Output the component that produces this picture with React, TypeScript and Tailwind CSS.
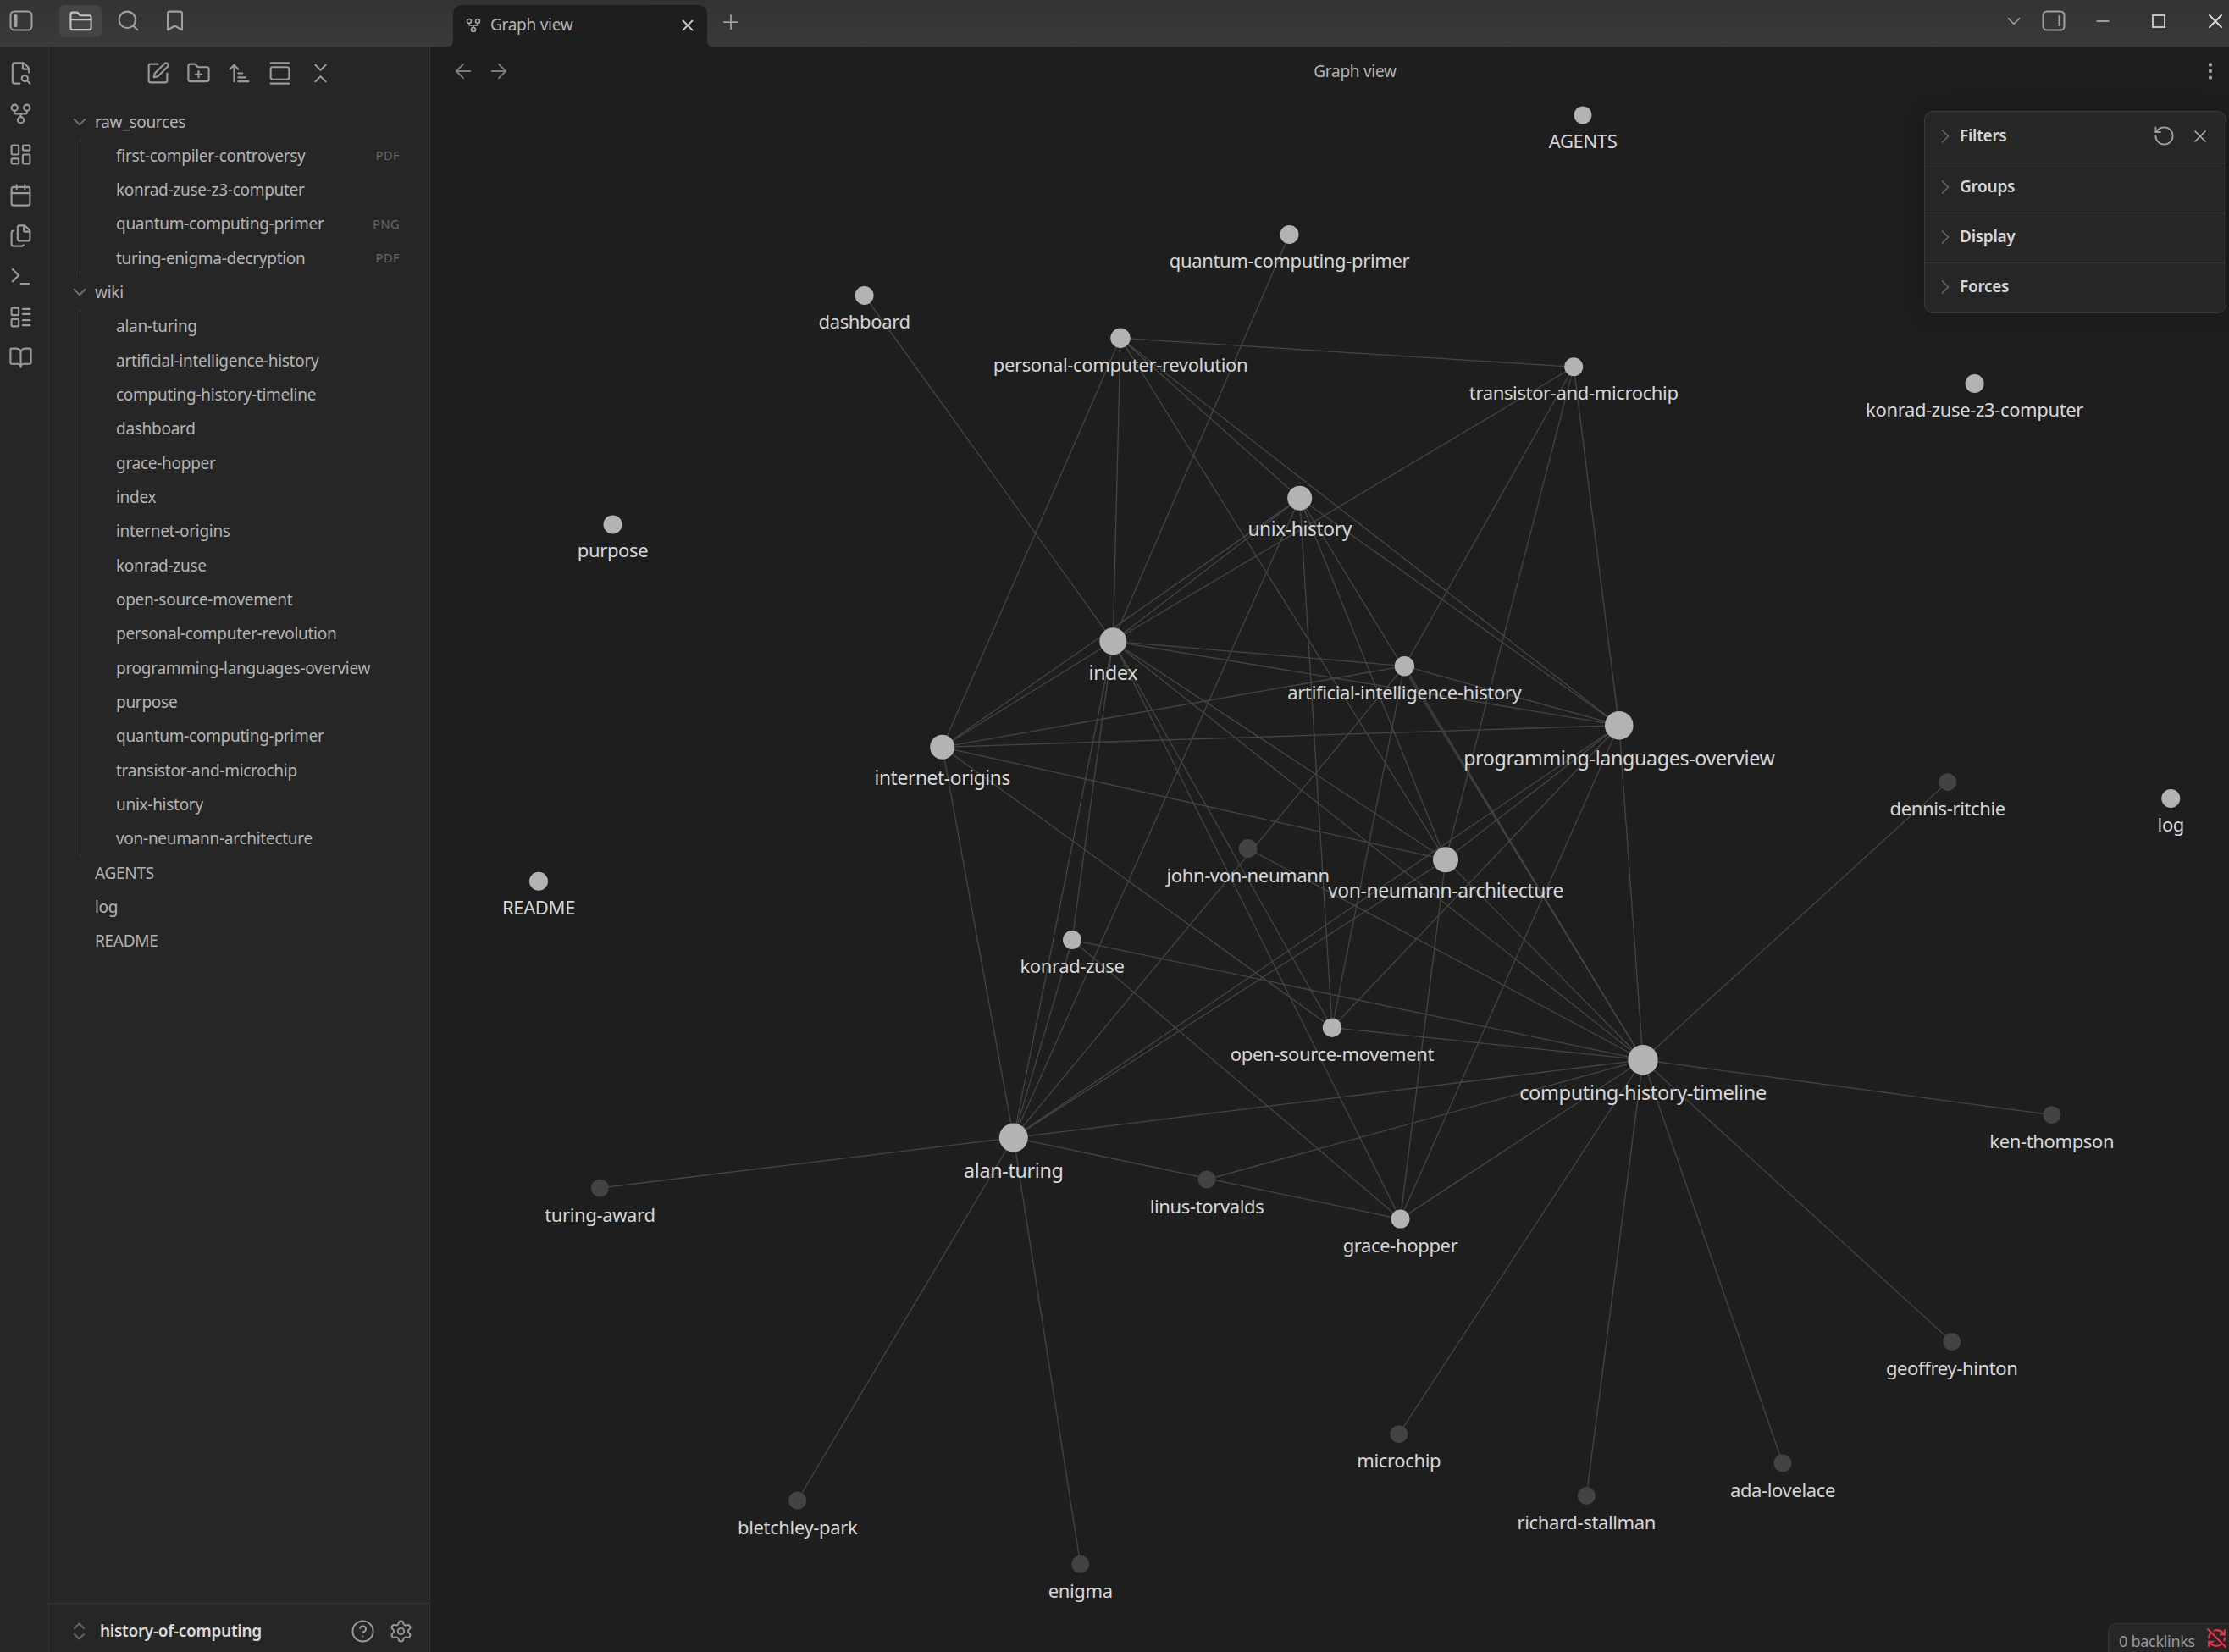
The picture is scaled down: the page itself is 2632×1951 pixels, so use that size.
import React from 'react';
import {
  ArrowLeft,
  ArrowRight,
  ArrowUpNarrowWide,
  Bookmark,
  BookOpen,
  Calendar,
  ChevronDown,
  ChevronRight,
  ChevronsDownUp,
  ChevronsUpDown,
  CircleHelp,
  EllipsisVertical,
  FileSearch2,
  Files,
  FolderClosed,
  FolderPlus,
  GalleryVertical,
  GitFork,
  LayoutDashboard,
  LayoutList,
  Minus,
  Plus,
  RefreshCwOff,
  RotateCcw,
  Search,
  Settings,
  SquarePen,
  Terminal,
  X,
} from 'lucide-react';

type GraphNode = { x: number; y: number; r: number; dim?: boolean };

const NODES: Record<string, GraphNode> = {
  AGENTS: { x: 1869, y: 136, r: 10.5 },
  'quantum-computing-primer': { x: 1522.5, y: 277, r: 11 },
  dashboard: { x: 1020.6, y: 349, r: 11 },
  'personal-computer-revolution': { x: 1323, y: 399.3, r: 11.7 },
  'transistor-and-microchip': { x: 1858.2, y: 433.3, r: 11 },
  'konrad-zuse-z3-computer': { x: 2331.6, y: 453, r: 11 },
  'unix-history': { x: 1534.7, y: 588.3, r: 14.5 },
  purpose: { x: 723.5, y: 619.4, r: 11 },
  index: { x: 1314.3, y: 757.3, r: 16 },
  'artificial-intelligence-history': { x: 1658.4, y: 786.7, r: 11.7 },
  'programming-languages-overview': { x: 1911.8, y: 856.7, r: 16.8 },
  'internet-origins': { x: 1112.7, y: 882.3, r: 14.5 },
  'dennis-ritchie': { x: 2299.7, y: 923.7, r: 10.5, dim: true },
  log: { x: 2563.3, y: 943, r: 11 },
  'john-von-neumann': { x: 1473.6, y: 1002, r: 11, dim: true },
  'von-neumann-architecture': { x: 1707, y: 1015.3, r: 15 },
  README: { x: 636, y: 1040.7, r: 11 },
  'konrad-zuse': { x: 1266, y: 1110, r: 11 },
  'open-source-movement': { x: 1573, y: 1213.7, r: 11.2 },
  'computing-history-timeline': { x: 1940, y: 1251.7, r: 17.7 },
  'alan-turing': { x: 1196.8, y: 1343.6, r: 17 },
  'ken-thompson': { x: 2422.8, y: 1316.7, r: 10.5, dim: true },
  'turing-award': { x: 708.4, y: 1403, r: 10.5, dim: true },
  'linus-torvalds': { x: 1425, y: 1393, r: 10.5, dim: true },
  'grace-hopper': { x: 1653.5, y: 1439.6, r: 11 },
  'geoffrey-hinton': { x: 2304.7, y: 1584.6, r: 10.5, dim: true },
  microchip: { x: 1651.8, y: 1693.7, r: 10.5, dim: true },
  'ada-lovelace': { x: 2105, y: 1728, r: 10.5, dim: true },
  'richard-stallman': { x: 1873.3, y: 1766.6, r: 10.5, dim: true },
  'bletchley-park': { x: 941.7, y: 1772, r: 10.5, dim: true },
  enigma: { x: 1275.7, y: 1847.3, r: 10.5, dim: true },
};

const EDGES: [string, string][] = [
  ['dashboard', 'index'],
  ['quantum-computing-primer', 'index'],
  ['personal-computer-revolution', 'transistor-and-microchip'],
  ['personal-computer-revolution', 'internet-origins'],
  ['personal-computer-revolution', 'index'],
  ['personal-computer-revolution', 'unix-history'],
  ['personal-computer-revolution', 'programming-languages-overview'],
  ['personal-computer-revolution', 'von-neumann-architecture'],
  ['transistor-and-microchip', 'index'],
  ['transistor-and-microchip', 'artificial-intelligence-history'],
  ['transistor-and-microchip', 'von-neumann-architecture'],
  ['transistor-and-microchip', 'programming-languages-overview'],
  ['unix-history', 'index'],
  ['unix-history', 'internet-origins'],
  ['unix-history', 'alan-turing'],
  ['unix-history', 'open-source-movement'],
  ['unix-history', 'von-neumann-architecture'],
  ['unix-history', 'computing-history-timeline'],
  ['unix-history', 'programming-languages-overview'],
  ['index', 'internet-origins'],
  ['index', 'artificial-intelligence-history'],
  ['index', 'programming-languages-overview'],
  ['index', 'von-neumann-architecture'],
  ['index', 'computing-history-timeline'],
  ['index', 'konrad-zuse'],
  ['index', 'alan-turing'],
  ['index', 'open-source-movement'],
  ['index', 'grace-hopper'],
  ['artificial-intelligence-history', 'internet-origins'],
  ['artificial-intelligence-history', 'programming-languages-overview'],
  ['artificial-intelligence-history', 'alan-turing'],
  ['artificial-intelligence-history', 'open-source-movement'],
  ['artificial-intelligence-history', 'computing-history-timeline'],
  ['programming-languages-overview', 'internet-origins'],
  ['programming-languages-overview', 'von-neumann-architecture'],
  ['programming-languages-overview', 'alan-turing'],
  ['programming-languages-overview', 'open-source-movement'],
  ['programming-languages-overview', 'grace-hopper'],
  ['programming-languages-overview', 'computing-history-timeline'],
  ['internet-origins', 'alan-turing'],
  ['internet-origins', 'von-neumann-architecture'],
  ['internet-origins', 'open-source-movement'],
  ['john-von-neumann', 'computing-history-timeline'],
  ['von-neumann-architecture', 'alan-turing'],
  ['von-neumann-architecture', 'grace-hopper'],
  ['von-neumann-architecture', 'computing-history-timeline'],
  ['konrad-zuse', 'alan-turing'],
  ['konrad-zuse', 'computing-history-timeline'],
  ['konrad-zuse', 'grace-hopper'],
  ['open-source-movement', 'computing-history-timeline'],
  ['alan-turing', 'turing-award'],
  ['alan-turing', 'bletchley-park'],
  ['alan-turing', 'enigma'],
  ['alan-turing', 'computing-history-timeline'],
  ['alan-turing', 'grace-hopper'],
  ['linus-torvalds', 'computing-history-timeline'],
  ['grace-hopper', 'computing-history-timeline'],
  ['computing-history-timeline', 'dennis-ritchie'],
  ['computing-history-timeline', 'ken-thompson'],
  ['computing-history-timeline', 'geoffrey-hinton'],
  ['computing-history-timeline', 'ada-lovelace'],
  ['computing-history-timeline', 'richard-stallman'],
  ['computing-history-timeline', 'microchip'],
];

const RAW_SOURCES: [string, string?][] = [
  ['first-compiler-controversy', 'PDF'],
  ['konrad-zuse-z3-computer'],
  ['quantum-computing-primer', 'PNG'],
  ['turing-enigma-decryption', 'PDF'],
];

const WIKI = [
  'alan-turing',
  'artificial-intelligence-history',
  'computing-history-timeline',
  'dashboard',
  'grace-hopper',
  'index',
  'internet-origins',
  'konrad-zuse',
  'open-source-movement',
  'personal-computer-revolution',
  'programming-languages-overview',
  'purpose',
  'quantum-computing-primer',
  'transistor-and-microchip',
  'unix-history',
  'von-neumann-architecture',
];

function SidebarToggle({ side }: { side: 'left' | 'right' }) {
  return (
    <svg width="28" height="26" viewBox="0 0 28 26" fill="none" stroke="currentColor" strokeWidth="2">
      <rect x="1.5" y="1.5" width="25" height="22" rx="4.5" />
      {side === 'left' ? (
        <rect x="5" y="5" width="4.5" height="15" rx="1.5" fill="currentColor" stroke="none" />
      ) : (
        <line x1="20.5" y1="6" x2="20.5" y2="19" />
      )}
    </svg>
  );
}

function TitleBar() {
  return (
    <div className="flex h-[55px] shrink-0 bg-linear-to-b from-[#333333] to-[#3a3a3a] text-[#a0a0a0]">
      <div className="flex w-[535px] shrink-0 items-start">
        <div className="ml-[11px] mt-[12px] flex h-[26px] w-[28px] items-center justify-center">
          <SidebarToggle side="left" />
        </div>
        <div className="ml-[31px] mt-[6px] flex h-[38px] w-[50px] items-center justify-center rounded-[6px] bg-[#444444] text-[#c4c4c4]">
          <FolderClosed size={29} strokeWidth={1.75} />
        </div>
        <div className="ml-[17px] mt-[10px]">
          <Search size={29} strokeWidth={1.75} />
        </div>
        <div className="ml-[26px] mt-[10px]">
          <Bookmark size={29} strokeWidth={1.75} />
        </div>
      </div>

      <div className="relative mt-[6px] flex h-[49px] w-[300px] items-center rounded-t-[10px] bg-[#1e1e1e] pb-[2px] pl-[14px] pr-[12px]">
        <div className="absolute bottom-0 left-[-6px] h-[6px] w-[6px] bg-[#1e1e1e]">
          <div className="h-full w-full rounded-br-[6px] bg-[#3a3a3a]" />
        </div>
        <div className="absolute bottom-0 right-[-6px] h-[6px] w-[6px] bg-[#1e1e1e]">
          <div className="h-full w-full rounded-bl-[6px] bg-[#3a3a3a]" />
        </div>
        <GitFork size={20} strokeWidth={1.9} className="text-[#a8a8a8]" />
        <span className="ml-[10px] text-[#b4b4b4]">Graph view</span>
        <X size={22} strokeWidth={2} className="ml-auto text-[#c8c8c8]" />
      </div>
      <div className="ml-[14px] mt-[12px]">
        <Plus size={28} strokeWidth={1.5} />
      </div>

      <div className="ml-auto flex items-center pb-[5px]">
        <ChevronDown size={26} strokeWidth={1.6} />
        <div className="ml-[20px] flex">
          <SidebarToggle side="right" />
        </div>
        <Minus size={24} strokeWidth={1.4} className="ml-[32px] text-[#c0c0c0]" />
        <div className="ml-[46px] h-[16px] w-[16px] border-2 border-[#c0c0c0]" />
        <X size={28} strokeWidth={1.6} className="ml-[45px] mr-[2px] text-[#dadada]" />
      </div>
    </div>
  );
}

function Ribbon() {
  const icons = [FileSearch2, GitFork, LayoutDashboard, Calendar, Files, Terminal, LayoutList, BookOpen];
  return (
    <div className="flex w-[58px] shrink-0 flex-col items-start gap-[19px] border-r border-[#333333] bg-[#262626] pl-[10px] pt-[17px] text-[#9a9a9a]">
      {icons.map((Icon, i) => (
        <Icon key={i} size={29} strokeWidth={1.75} />
      ))}
    </div>
  );
}

function TreeRow({ label, badge }: { label: string; badge?: string }) {
  return (
    <div className="flex h-[40.33px] items-center pr-[35px] text-[#b4b4b4]">
      <span>{label}</span>
      {badge && <span className="ml-auto text-[14.5px] tracking-[0.5px] text-[#666666]">{badge}</span>}
    </div>
  );
}

function Folder({ name, children }: { name: string; children: React.ReactNode }) {
  return (
    <div>
      <div className="flex h-[40.33px] items-center text-[#b4b4b4]">
        <ChevronDown size={26} strokeWidth={1.75} className="ml-[23px] mr-[5px] text-[#6e6e6e]" />
        <span>{name}</span>
      </div>
      <div className="ml-[36px] border-l border-[#3f3f3f] pl-[42px]">{children}</div>
    </div>
  );
}

function Sidebar() {
  const tools = [SquarePen, FolderPlus, ArrowUpNarrowWide, GalleryVertical, ChevronsDownUp];
  return (
    <div className="flex w-[450px] shrink-0 flex-col border-r border-[#333333] bg-[#262626]">
      <div className="flex h-[62px] shrink-0 items-center justify-center gap-[19px] text-[#9a9a9a]">
        {tools.map((Icon, i) => (
          <Icon key={i} size={29} strokeWidth={1.75} />
        ))}
      </div>
      <div className="flex-1 pt-[6.6px]">
        <Folder name="raw_sources">
          {RAW_SOURCES.map(([name, badge]) => (
            <TreeRow key={name} label={name} badge={badge} />
          ))}
        </Folder>
        <Folder name="wiki">
          {WIKI.map((name) => (
            <TreeRow key={name} label={name} />
          ))}
        </Folder>
        {['AGENTS', 'log', 'README'].map((name) => (
          <div key={name} className="flex h-[40.33px] items-center pl-[54px] text-[#b4b4b4]">
            {name}
          </div>
        ))}
      </div>
      <div className="flex h-[58px] shrink-0 items-center border-t border-[#363636] pt-[8px]">
        <ChevronsUpDown size={27} strokeWidth={1.75} className="ml-[22px] text-[#666666]" />
        <span className="ml-[11px] font-semibold text-[#dadada]">history-of-computing</span>
        <CircleHelp size={29} strokeWidth={1.6} className="ml-auto text-[#9a9a9a]" />
        <Settings size={29} strokeWidth={1.6} className="ml-[16px] mr-[19px] text-[#9a9a9a]" />
      </div>
    </div>
  );
}

function labelOffset(n: GraphNode) {
  if (n.r >= 14) return 30;
  return n.dim ? 29 : 28;
}

// labels of the bigger nodes are drawn slightly larger
function labelSize(n: GraphNode) {
  return 22 * (1 + Math.max(0, n.r - 11.7) * 0.0115);
}

function GraphCanvas() {
  return (
    <svg className="absolute inset-0 h-full w-full" viewBox="508 55 2124 1896">
      {EDGES.map(([a, b]) => (
        <line
          key={a + b}
          x1={NODES[a].x}
          y1={NODES[a].y}
          x2={NODES[b].x}
          y2={NODES[b].y}
          stroke="#454545"
          strokeWidth="1.3"
        />
      ))}
      {Object.entries(NODES).map(([name, n]) => (
        <g key={name}>
          <circle cx={n.x} cy={n.y} r={n.r} fill={n.dim ? '#434343' : '#b3b3b3'} />
          <text
            x={n.x}
            y={n.y + n.r + labelOffset(n)}
            textAnchor="middle"
            fill="#d6d6d6"
            fontSize={labelSize(n)}
            className="tracking-[-0.36px]"
          >
            {name}
          </text>
        </g>
      ))}
    </svg>
  );
}

function GraphControls() {
  const rows = ['Filters', 'Groups', 'Display', 'Forces'];
  return (
    <div className="absolute right-[3px] top-[76px] w-[357px] rounded-[10px] border border-[#3a3a3a] bg-[#262626] shadow-[0_0_24px_rgba(0,0,0,0.25)]">
      {rows.map((name, i) => (
        <div
          key={name}
          className={
            i === 0
              ? 'flex h-[60px] items-center pb-[3px] pl-[10px] pr-[18px]'
              : 'flex h-[59px] items-center border-t border-[#363636] pb-[3px] pl-[10px] pr-[18px]'
          }
        >
          <ChevronRight size={28} strokeWidth={1.5} className="text-[#666666]" />
          <span className="ml-[3px] font-semibold text-[#d6d6d6]">{name}</span>
          {i === 0 && (
            <>
              <RotateCcw size={27} strokeWidth={1.6} className="ml-auto text-[#a0a0a0]" />
              <X size={24} strokeWidth={1.6} className="ml-[17px] text-[#b0b0b0]" />
            </>
          )}
        </div>
      ))}
    </div>
  );
}

function GraphView() {
  return (
    <div className="relative flex-1 overflow-hidden bg-[#1e1e1e]">
      <GraphCanvas />
      <div className="relative flex h-[58px] items-center">
        <div className="flex w-[104px] shrink-0 items-center gap-[14px] pl-[25px] text-[#7c7c7c]">
          <ArrowLeft size={28} strokeWidth={1.6} />
          <ArrowRight size={28} strokeWidth={1.6} />
        </div>
        <div className="flex-1 text-center text-[#b4b4b4]">Graph view</div>
        <div className="flex w-[44px] shrink-0 justify-center text-[#a0a0a0]">
          <EllipsisVertical size={26} strokeWidth={2} />
        </div>
      </div>
      <GraphControls />
      <div className="absolute bottom-0 right-0 flex h-[34px] w-[143px] items-center rounded-tl-[10px] border-l border-t border-[#363636] bg-[#262626] pl-[12px] text-[18px] text-[#9a9a9a]">
        <span className="pt-[7px]">0 backlinks</span>
        <RefreshCwOff size={25} strokeWidth={2} className="ml-auto mr-[2px] text-[#e93147]" />
      </div>
    </div>
  );
}

export default function App() {
  return (
    <div className="flex h-[1951px] w-[2632px] flex-col overflow-hidden bg-[#1e1e1e] font-['Noto_Sans','Open_Sans',sans-serif] text-[19px] tracking-[-0.28px]">
      <TitleBar />
      <div className="flex min-h-0 flex-1">
        <Ribbon />
        <Sidebar />
        <GraphView />
      </div>
    </div>
  );
}
